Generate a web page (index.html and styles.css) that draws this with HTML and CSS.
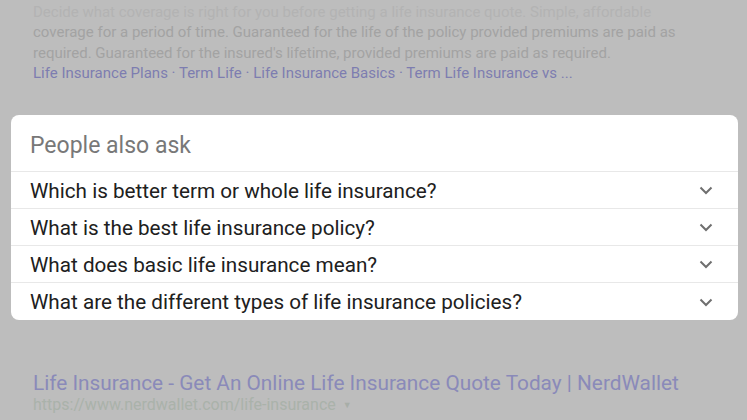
FILE: index.html
```html
<!DOCTYPE html>
<html>
<head>
<meta charset="utf-8">
<link rel="stylesheet" href="styles.css">
</head>
<body>
<div class="page">
  <div class="snippet">
    <p class="line faded">Decide what coverage is right for you before getting a life insurance quote. Simple, affordable</p>
    <p class="line">coverage for a period of time. Guaranteed for the life of the policy provided premiums are paid as</p>
    <p class="line">required. Guaranteed for the insured's lifetime, provided premiums are paid as required.</p>
    <p class="line links">Life Insurance Plans · Term Life · Life Insurance Basics · Term Life Insurance vs ...</p>
  </div>

  <div class="card">
    <div class="card-head">People also ask</div>
    <div class="q"><span>Which is better term or whole life insurance?</span><svg class="chev" viewBox="0 0 14 9"><path d="M1.5 1.5 L7 7 L12.5 1.5"/></svg></div>
    <div class="q"><span>What is the best life insurance policy?</span><svg class="chev" viewBox="0 0 14 9"><path d="M1.5 1.5 L7 7 L12.5 1.5"/></svg></div>
    <div class="q"><span>What does basic life insurance mean?</span><svg class="chev" viewBox="0 0 14 9"><path d="M1.5 1.5 L7 7 L12.5 1.5"/></svg></div>
    <div class="q"><span>What are the different types of life insurance policies?</span><svg class="chev" viewBox="0 0 14 9"><path d="M1.5 1.5 L7 7 L12.5 1.5"/></svg></div>
  </div>

  <div class="result">
    <div class="title">Life Insurance - Get An Online Life Insurance Quote Today | NerdWallet</div>
    <div class="url">https://www.nerdwallet.com/life-insurance <span class="tri">▼</span></div>
  </div>
</div>
</body>
</html>
```

FILE: styles.css
```css
html, body {
  margin: 0;
  padding: 0;
  background: #bdbdbd;
  height: 100%;
  overflow: hidden;
}
.page {
  font-family: Roboto, "Liberation Sans", sans-serif;
  display: flex;
  flex-direction: column;
}
.snippet {
  padding: 0 0 0 33px;
  margin-top: 2px;
  height: 113px;
}
.line {
  margin: 0;
  font-size: 15px;
  line-height: 20.3px;
  color: #a3a3a3;
  white-space: nowrap;
}
.line.faded {
  color: #b3b3b3;
}
.line.links {
  color: #7d7db0;
}
.card {
  margin: 0 9px 0 11px;
  background: #ffffff;
  border-radius: 8px;
  overflow: hidden;
  height: 205px;
}
.card-head {
  height: 57px;
  box-sizing: border-box;
  padding: 17px 19px 0;
  font-size: 23px;
  line-height: 28px;
  color: #787878;
  border-bottom: 1px solid #e8e8e8;
}
.q {
  height: 37px;
  box-sizing: border-box;
  display: flex;
  align-items: center;
  justify-content: space-between;
  padding: 1px 25px 0 19px;
  font-size: 20.7px;
  color: #202020;
  border-bottom: 1px solid #e8e8e8;
}
.q:last-child {
  border-bottom: none;
}
.chev {
  width: 14px;
  height: 9px;
  fill: none;
  stroke: #6f6f6f;
  stroke-width: 2;
}
.result {
  padding: 51px 0 0 33px;
}
.title {
  font-size: 20.8px;
  line-height: 24px;
  color: #8a8ab9;
  white-space: nowrap;
}
.url {
  font-size: 16px;
  line-height: 20px;
  color: #aab2aa;
  white-space: nowrap;
}
.tri {
  font-size: 9px;
  color: #a8aea8;
  vertical-align: 2px;
  margin-left: 3px;
}
```
